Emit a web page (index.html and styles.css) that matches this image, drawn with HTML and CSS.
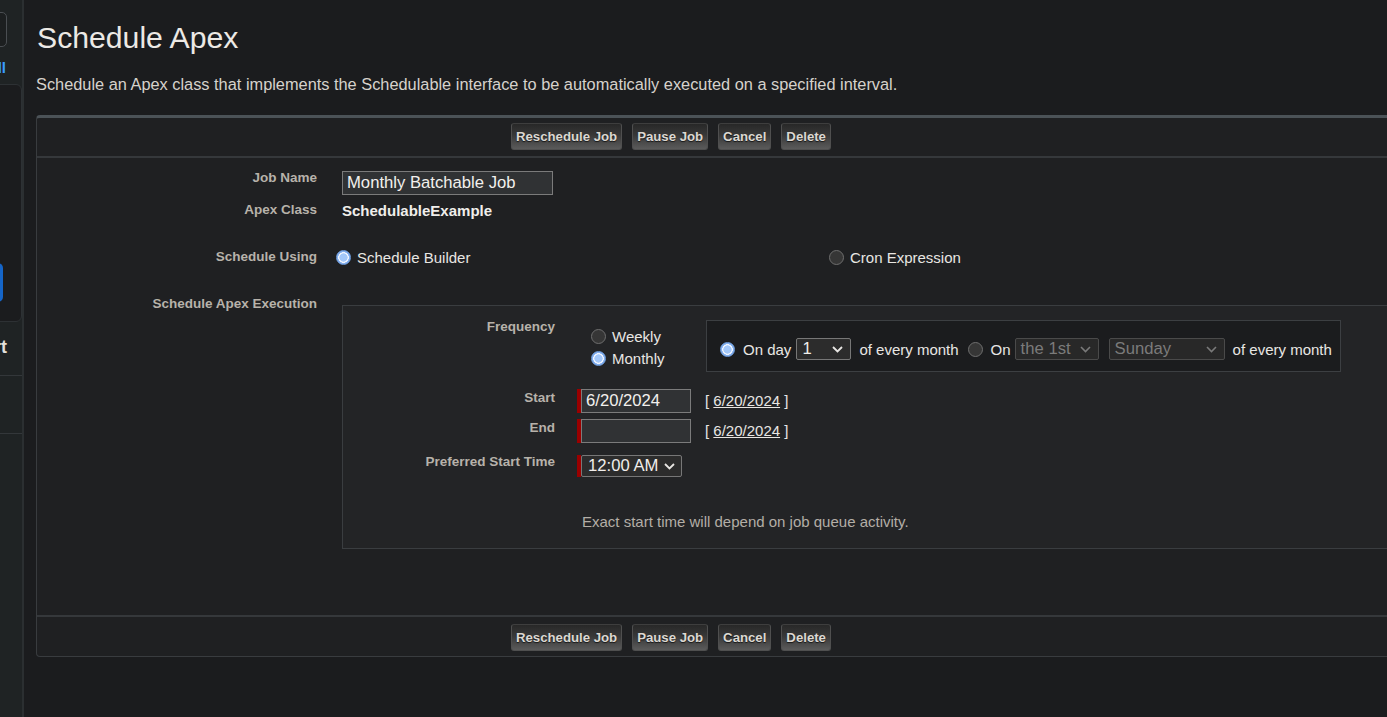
FILE: index.html
```html
<!DOCTYPE html>
<html lang="en">
<head>
<meta charset="utf-8">
<title>Schedule Apex</title>
<link rel="stylesheet" href="styles.css">
</head>
<body>
<div class="app">
  <aside class="side">
    <div class="side-inner">
      <div class="side-search"></div>
      <div class="side-link">View All</div>
      <div class="side-card">
        <div class="side-btn"></div>
      </div>
      <div class="side-heading">Quick Start</div>
      <div class="side-line"></div>
      <div class="side-line second"></div>
    </div>
  </aside>

  <main class="main">
    <h1 class="title">Schedule Apex</h1>
    <p class="desc">Schedule an Apex class that implements the Schedulable interface to be automatically executed on a specified interval.</p>

    <div class="panel">
      <div class="btn-row top">
        <button class="btn">Reschedule Job</button>
        <button class="btn">Pause Job</button>
        <button class="btn">Cancel</button>
        <button class="btn">Delete</button>
      </div>

      <div class="panel-body">
        <div class="row row-job">
          <div class="label">Job Name</div>
          <div class="data"><input class="text-input job-input" type="text" value="Monthly Batchable Job"></div>
        </div>
        <div class="row row-class">
          <div class="label">Apex Class</div>
          <div class="data value-strong">SchedulableExample</div>
        </div>
        <div class="row row-using">
          <div class="label">Schedule Using</div>
          <div class="data using">
            <label class="opt opt-builder"><input class="radio" type="radio" name="using" checked><span>Schedule Builder</span></label>
            <label class="opt"><input class="radio" type="radio" name="using"><span>Cron Expression</span></label>
          </div>
        </div>
        <div class="row row-exec">
          <div class="label">Schedule Apex Execution</div>
          <div class="data">
            <div class="exec-box">
              <div class="irow irow-freq">
                <div class="ilabel">Frequency</div>
                <div class="idata freq">
                  <div class="freq-opts">
                    <label class="fopt"><input class="radio" type="radio" name="freq"><span>Weekly</span></label>
                    <label class="fopt"><input class="radio" type="radio" name="freq" checked><span>Monthly</span></label>
                  </div>
                  <div class="month-box">
                    <input class="radio" type="radio" name="mode" checked>
                    <span class="mtext t-onday">On day</span>
                    <div class="select sel-day"><span>1</span><svg width="11" height="7" viewBox="0 0 11 7"><path d="M1 1l4.5 4.5L10 1" fill="none" stroke="#e8e6e3" stroke-width="1.8"/></svg></div>
                    <span class="mtext t-every1">of every month</span>
                    <input class="radio r-on" type="radio" name="mode">
                    <span class="mtext t-on">On</span>
                    <div class="select disabled sel-nth"><span>the 1st</span><svg width="11" height="7" viewBox="0 0 11 7"><path d="M1 1l4.5 4.5L10 1" fill="none" stroke="#7a7a7a" stroke-width="1.6"/></svg></div>
                    <div class="select disabled sel-dow"><span>Sunday</span><svg width="11" height="7" viewBox="0 0 11 7"><path d="M1 1l4.5 4.5L10 1" fill="none" stroke="#7a7a7a" stroke-width="1.6"/></svg></div>
                    <span class="mtext t-every2">of every month</span>
                  </div>
                </div>
              </div>

              <div class="irow irow-start">
                <div class="ilabel">Start</div>
                <div class="idata date">
                  <span class="req"></span><input class="text-input date-input" type="text" value="6/20/2024">
                  <span class="date-link">[ <a href="#">6/20/2024</a> ]</span>
                </div>
              </div>
              <div class="irow irow-end">
                <div class="ilabel">End</div>
                <div class="idata date">
                  <span class="req"></span><input class="text-input date-input" type="text" value="">
                  <span class="date-link">[ <a href="#">6/20/2024</a> ]</span>
                </div>
              </div>
              <div class="irow irow-time">
                <div class="ilabel">Preferred Start Time</div>
                <div class="idata time">
                  <span class="req short"></span>
                  <div class="select sel-time"><span>12:00 AM</span><svg width="11" height="7" viewBox="0 0 11 7"><path d="M1 1l4.5 4.5L10 1" fill="none" stroke="#e8e6e3" stroke-width="1.8"/></svg></div>
                </div>
              </div>
              <div class="irow irow-note">
                <div class="ilabel"></div>
                <div class="idata note">Exact start time will depend on job queue activity.</div>
              </div>
            </div>
          </div>
        </div>
      </div>

      <div class="btn-row bottom">
        <button class="btn">Reschedule Job</button>
        <button class="btn">Pause Job</button>
        <button class="btn">Cancel</button>
        <button class="btn">Delete</button>
      </div>
    </div>
  </main>
</div>
</body>
</html>
```

FILE: styles.css
```css
* { box-sizing: border-box; }

html, body {
  margin: 0;
  height: 100%;
}

body {
  background: #1b1c1e;
  color: #e8e6e3;
  font-family: "Liberation Sans", Arial, sans-serif;
  overflow: hidden;
}

.app {
  display: flex;
  height: 717px;
}

/* ---------- sidebar (mostly off-screen) ---------- */
.side {
  flex: 0 0 24px;
  width: 24px;
  background: #1f2324;
  border-right: 2px solid #2b2f31;
  overflow: hidden;
}

.side-inner {
  width: 220px;
  margin-left: -198px;
}

.side-search {
  margin: 12px 15px 0 0;
  height: 35px;
  border: 1px solid #4a4e52;
  border-radius: 5px;
  background: #1c1f20;
}

.side-link {
  margin-top: 12px;
  padding-right: 16px;
  text-align: right;
  font-size: 15px;
  line-height: 18px;
  font-weight: bold;
  color: #3a9cff;
}

.side-card {
  margin-top: 7px;
  height: 238px;
  border: 1px solid #2d3134;
  border-radius: 6px;
  background: #1b1c1e;
  padding-top: 178px;
}

.side-btn {
  height: 39px;
  margin-right: 18px;
  border-radius: 5px;
  background: #1565c8;
}

.side-heading {
  margin-top: 14px;
  padding-right: 15px;
  text-align: right;
  font-size: 18px;
  line-height: 22px;
  font-weight: bold;
  color: #e4e1dc;
}

.side-line {
  margin-top: 17px;
  border-top: 1px solid #33373a;
}

.side-line.second {
  margin-top: 57px;
}

/* ---------- main ---------- */
.main {
  flex: 1;
  min-width: 0;
  overflow: hidden;
  padding: 20px 0 0 12px;
}

.title {
  margin: 0 0 0 1px;
  font-size: 30.2px;
  line-height: 35px;
  font-weight: normal;
  color: #ece9e5;
}

.desc {
  margin: 20px 0 0;
  font-size: 16.35px;
  line-height: 18px;
  color: #d6d2cc;
}

.panel {
  width: 1420px;
  margin-top: 22px;
  background: #1f2022;
  border: 1px solid #393c3f;
  border-top: 3px solid #4b5257;
  border-radius: 4px;
}

.btn-row {
  display: flex;
  gap: 10px;
  padding-left: 474px;
}

.btn-row.top {
  padding-top: 5px;
  padding-bottom: 6px;
  border-bottom: 2px solid #35383b;
}

.btn-row.bottom {
  padding-top: 7px;
  padding-bottom: 5px;
  border-top: 2px solid #35383b;
}

.btn {
  height: 27px;
  margin: 0;
  padding: 0 4px;
  font-family: "Liberation Sans", Arial, sans-serif;
  font-size: 13.2px;
  font-weight: bold;
  color: #dcd8d2;
  text-shadow: 0 1px 1px rgba(0, 0, 0, 0.7);
  border: 1px solid #4f4f4f;
  border-top-color: #3e3e3e;
  border-radius: 3px;
  background: linear-gradient(to bottom, #282828 0%, #383838 45%, #5b5b5b 100%);
}

.panel-body {
  padding-bottom: 66px;
}

.row {
  display: grid;
  grid-template-columns: 281px 1fr;
  column-gap: 24px;
  align-items: start;
}

.label {
  padding-right: 1px;
  text-align: right;
  font-size: 13.5px;
  line-height: 16px;
  font-weight: bold;
  color: #b7b2aa;
}

.row-job { margin-top: 12px; }
.row-class { margin-top: 7px; }
.row-using { margin-top: 29px; }
.row-exec { margin-top: 31px; }

.text-input {
  display: block;
  height: 24px;
  margin: 0;
  padding: 0 4px;
  border: 1px solid #7b7b7b;
  background: #303234;
  color: #f2f0ed;
  font-family: "Liberation Sans", Arial, sans-serif;
  font-size: 16.67px;
  outline: none;
}

.job-input {
  width: 211px;
  margin-top: 1px;
}

.value-strong {
  font-size: 15px;
  line-height: 18px;
  font-weight: bold;
  color: #f0eeeb;
}

.using {
  display: flex;
  align-items: center;
  height: 16px;
  font-size: 15px;
}

.opt {
  display: flex;
  align-items: center;
  gap: 6px;
}

.opt-builder {
  width: 493px;
  margin-left: -6px;
}

.radio {
  appearance: none;
  -webkit-appearance: none;
  flex: 0 0 15px;
  width: 15px;
  height: 15px;
  margin: 0;
  border-radius: 50%;
  border: 1px solid #6e6e6e;
  background: #363636;
}

.radio:checked {
  border: 1px solid #6f9fe0;
  background: radial-gradient(circle at center, #a3c8fa 0 3.9px, #eef4ff 4.3px 5.1px, #86b1ef 5.5px);
}

.exec-box {
  margin-top: 9px;
  border: 1px solid #3a3d40;
  background: #232426;
  padding: 13px 0 17px;
}

.irow {
  display: grid;
  grid-template-columns: 212px 1fr;
  column-gap: 22px;
  align-items: start;
}

.ilabel {
  text-align: right;
  font-size: 13.5px;
  line-height: 16px;
  font-weight: bold;
  color: #b7b2aa;
}

.freq {
  display: flex;
  align-items: flex-start;
}

.freq-opts {
  flex: 0 0 129px;
  padding-top: 6px;
}

.fopt {
  display: flex;
  align-items: center;
  gap: 6px;
  height: 22px;
  padding-left: 14px;
  font-size: 15px;
}

.month-box {
  display: flex;
  align-items: center;
  width: 635px;
  height: 52px;
  margin-top: 1px;
  padding: 6px 0 0 13px;
  border: 1px solid #3c3f42;
  background: #1b1c1e;
  font-size: 15px;
}

.mtext { white-space: nowrap; }
.t-onday { margin-left: 8px; }
.sel-day { margin-left: 5px; width: 55px; }
.t-every1 { margin-left: 8px; }
.r-on { margin-left: 9px; }
.t-on { margin-left: 8px; }
.sel-nth { margin-left: 4px; width: 84px; }
.sel-dow { margin-left: 10px; width: 116px; }
.t-every2 { margin-left: 8px; }

.select {
  display: flex;
  align-items: center;
  justify-content: space-between;
  height: 22px;
  padding: 0 7px 0 5px;
  border: 1px solid #777;
  border-radius: 2px;
  background: #2c2c2c;
  color: #f0eeeb;
  font-size: 16.67px;
  line-height: 20px;
  white-space: nowrap;
}

.select.disabled {
  border-color: #4a4a4a;
  background: #282828;
  color: #7b7b7b;
}

.irow-start { margin-top: 17px; }
.irow-end { margin-top: 6px; }
.irow-time { margin-top: 11px; }
.irow-note { margin-top: 36px; }

.irow-start .ilabel,
.irow-end .ilabel { margin-top: 1px; }

.date {
  display: flex;
  align-items: center;
  height: 24px;
  font-size: 15px;
}

.req {
  width: 4px;
  height: 24px;
  background: #9a0000;
}

.req.short { height: 22px; }

.date-input { width: 110px; }

.date-link {
  margin-left: 14px;
  margin-top: -2px;
  color: #e8e6e3;
  white-space: nowrap;
}

.date-link a {
  color: #e8e6e3;
  text-decoration: underline;
}

.time {
  display: flex;
  align-items: center;
}

.sel-time {
  width: 101px;
  margin-top: 1px;
  padding: 0 6px 0 6px;
}

.note {
  padding-left: 5px;
  font-size: 15px;
  line-height: 18px;
  color: #b3aea6;
}
```
